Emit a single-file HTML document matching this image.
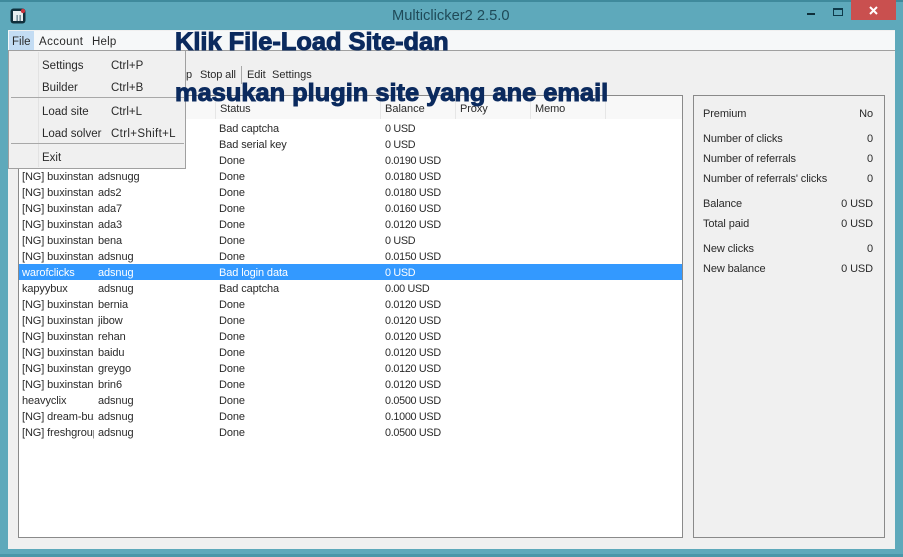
<!DOCTYPE html>
<html><head><meta charset="utf-8"><style>
html,body{margin:0;padding:0}
body{width:903px;height:557px;position:relative;overflow:hidden;background:#5ea9bb;font-family:"Liberation Sans",sans-serif;font-size:11px;letter-spacing:-.1px;color:#2a2a2a}
.a{position:absolute;white-space:nowrap}
.t{position:absolute;white-space:nowrap;line-height:16px;height:16px;margin-top:1px}
.t[style*="left:385px"]{font-size:10.8px;letter-spacing:-.3px}
.m{font-size:11.5px;letter-spacing:0}
.ov{position:absolute;white-space:nowrap;font-weight:bold;color:#0b2a5e;font-size:25.4px;letter-spacing:0;line-height:30px;-webkit-text-stroke:1px #0b2a5e}
</style></head><body>
<div class="a" style="left:0;top:0;width:903px;height:2px;background:#3f8a9c"></div>
<div class="a" style="left:8px;top:30px;width:887px;height:519px;background:#f0f0f0"></div>
<div class="a" style="left:0;top:554px;width:903px;height:3px;background:#4a97a9"></div>
<div class="a" style="left:392px;top:8px;font-size:14.7px;letter-spacing:0;line-height:16px;color:#1f4a58">Multiclicker2 2.5.0</div>
<svg class="a" style="left:10px;top:8px" width="16" height="16" viewBox="0 0 16 16"><rect x=".5" y=".5" width="15" height="15" rx="3" fill="#10303c"/><rect x="3" y="3" width="10" height="10" fill="#e8eef0"/><rect x="6.5" y="7" width="1.3" height="6" fill="#5f7f8a"/><rect x="9.5" y="7" width="1.3" height="6" fill="#5f7f8a"/><circle cx="13" cy="3" r="2.2" fill="#c8353f"/></svg>
<div class="a" style="left:807px;top:13px;width:8px;height:2px;background:#0f2f3a"></div>
<div class="a" style="left:833px;top:8px;width:8px;height:5px;border:1.5px solid #0f3a4a;border-top-width:2.5px"></div>
<div class="a" style="left:851px;top:0;width:45px;height:20px;background:#c9504f"></div>
<svg class="a" style="left:868px;top:5px" width="11" height="11" viewBox="0 0 11 11"><path d="M2 2L9 9M9 2L2 9" stroke="#fff" stroke-width="2"/></svg>
<div class="a" style="left:8px;top:31px;width:887px;height:19px;background:#f6f8f9"></div>
<div class="a" style="left:8px;top:50px;width:887px;height:1px;background:#a0a0a0"></div>
<div class="a" style="left:9px;top:31px;width:25px;height:19px;background:#c3dcf3"></div>
<div class="t m" style="left:12px;top:33px">File</div>
<div class="t m" style="left:39px;top:33px;letter-spacing:.4px">Account</div>
<div class="t m" style="left:92px;top:33px;letter-spacing:.2px">Help</div>
<div class="t" style="left:186px;top:66px">p</div>
<div class="t" style="left:200px;top:66px">Stop all</div>
<div class="a" style="left:241px;top:66px;width:1px;height:18px;background:#a8a8a8"></div>
<div class="t" style="left:247px;top:66px">Edit</div>
<div class="t" style="left:272px;top:66px;letter-spacing:0">Settings</div>
<div class="a" style="left:18px;top:95px;width:663px;height:441px;background:#fff;border:1px solid #8a8a8a"></div>
<div class="a" style="left:19px;top:96px;width:663px;height:23px;background:#f8f8f8"></div>
<div class="a" style="left:215px;top:96px;width:1px;height:23px;background:#e6e6e6"></div>
<div class="a" style="left:380px;top:96px;width:1px;height:23px;background:#e6e6e6"></div>
<div class="a" style="left:455px;top:96px;width:1px;height:23px;background:#e6e6e6"></div>
<div class="a" style="left:530px;top:96px;width:1px;height:23px;background:#e6e6e6"></div>
<div class="a" style="left:605px;top:96px;width:1px;height:23px;background:#e6e6e6"></div>
<div class="t" style="left:220px;top:100px">Status</div>
<div class="t" style="left:385px;top:100px;font-size:11px;letter-spacing:0">Balance</div>
<div class="t" style="left:460px;top:100px">Proxy</div>
<div class="t" style="left:535px;top:100px">Memo</div>
<div class="a" style="left:19px;top:264px;width:663px;height:16px;background:#3399ff"></div>
<div class="t" style="left:219px;top:120px">Bad captcha</div><div class="t" style="left:385px;top:120px">0 USD</div>
<div class="t" style="left:219px;top:136px">Bad serial key</div><div class="t" style="left:385px;top:136px">0 USD</div>
<div class="t" style="left:219px;top:152px">Done</div><div class="t" style="left:385px;top:152px">0.0190 USD</div>
<div class="t" style="left:22px;top:168px">[NG] buxinstan</div><div class="t" style="left:98px;top:168px">adsnugg</div><div class="t" style="left:219px;top:168px">Done</div><div class="t" style="left:385px;top:168px">0.0180 USD</div>
<div class="t" style="left:22px;top:184px">[NG] buxinstan</div><div class="t" style="left:98px;top:184px">ads2</div><div class="t" style="left:219px;top:184px">Done</div><div class="t" style="left:385px;top:184px">0.0180 USD</div>
<div class="t" style="left:22px;top:200px">[NG] buxinstan</div><div class="t" style="left:98px;top:200px">ada7</div><div class="t" style="left:219px;top:200px">Done</div><div class="t" style="left:385px;top:200px">0.0160 USD</div>
<div class="t" style="left:22px;top:216px">[NG] buxinstan</div><div class="t" style="left:98px;top:216px">ada3</div><div class="t" style="left:219px;top:216px">Done</div><div class="t" style="left:385px;top:216px">0.0120 USD</div>
<div class="t" style="left:22px;top:232px">[NG] buxinstan</div><div class="t" style="left:98px;top:232px">bena</div><div class="t" style="left:219px;top:232px">Done</div><div class="t" style="left:385px;top:232px">0 USD</div>
<div class="t" style="left:22px;top:248px">[NG] buxinstan</div><div class="t" style="left:98px;top:248px">adsnug</div><div class="t" style="left:219px;top:248px">Done</div><div class="t" style="left:385px;top:248px">0.0150 USD</div>
<div class="t" style="left:22px;top:264px;color:#fff">warofclicks</div><div class="t" style="left:98px;top:264px;color:#fff">adsnug</div><div class="t" style="left:219px;top:264px;color:#fff">Bad login data</div><div class="t" style="left:385px;top:264px;color:#fff">0 USD</div>
<div class="t" style="left:22px;top:280px">kapyybux</div><div class="t" style="left:98px;top:280px">adsnug</div><div class="t" style="left:219px;top:280px">Bad captcha</div><div class="t" style="left:385px;top:280px">0.00 USD</div>
<div class="t" style="left:22px;top:296px">[NG] buxinstan</div><div class="t" style="left:98px;top:296px">bernia</div><div class="t" style="left:219px;top:296px">Done</div><div class="t" style="left:385px;top:296px">0.0120 USD</div>
<div class="t" style="left:22px;top:312px">[NG] buxinstan</div><div class="t" style="left:98px;top:312px">jibow</div><div class="t" style="left:219px;top:312px">Done</div><div class="t" style="left:385px;top:312px">0.0120 USD</div>
<div class="t" style="left:22px;top:328px">[NG] buxinstan</div><div class="t" style="left:98px;top:328px">rehan</div><div class="t" style="left:219px;top:328px">Done</div><div class="t" style="left:385px;top:328px">0.0120 USD</div>
<div class="t" style="left:22px;top:344px">[NG] buxinstan</div><div class="t" style="left:98px;top:344px">baidu</div><div class="t" style="left:219px;top:344px">Done</div><div class="t" style="left:385px;top:344px">0.0120 USD</div>
<div class="t" style="left:22px;top:360px">[NG] buxinstan</div><div class="t" style="left:98px;top:360px">greygo</div><div class="t" style="left:219px;top:360px">Done</div><div class="t" style="left:385px;top:360px">0.0120 USD</div>
<div class="t" style="left:22px;top:376px">[NG] buxinstan</div><div class="t" style="left:98px;top:376px">brin6</div><div class="t" style="left:219px;top:376px">Done</div><div class="t" style="left:385px;top:376px">0.0120 USD</div>
<div class="t" style="left:22px;top:392px">heavyclix</div><div class="t" style="left:98px;top:392px">adsnug</div><div class="t" style="left:219px;top:392px">Done</div><div class="t" style="left:385px;top:392px">0.0500 USD</div>
<div class="t" style="left:22px;top:408px;width:72px;overflow:hidden">[NG] dream-bux</div><div class="t" style="left:98px;top:408px">adsnug</div><div class="t" style="left:219px;top:408px">Done</div><div class="t" style="left:385px;top:408px">0.1000 USD</div>
<div class="t" style="left:22px;top:424px;width:72px;overflow:hidden">[NG] freshgroup</div><div class="t" style="left:98px;top:424px">adsnug</div><div class="t" style="left:219px;top:424px">Done</div><div class="t" style="left:385px;top:424px">0.0500 USD</div>
<div class="a" style="left:693px;top:95px;width:190px;height:441px;border:1px solid #8a8a8a"></div>
<div class="t" style="left:703px;top:105px">Premium</div><div class="t" style="right:30px;top:105px">No</div>
<div class="t" style="left:703px;top:130px">Number of clicks</div><div class="t" style="right:30px;top:130px">0</div>
<div class="t" style="left:703px;top:150px">Number of referrals</div><div class="t" style="right:30px;top:150px">0</div>
<div class="t" style="left:703px;top:170px">Number of referrals' clicks</div><div class="t" style="right:30px;top:170px">0</div>
<div class="t" style="left:703px;top:195px">Balance</div><div class="t" style="right:30px;top:195px">0 USD</div>
<div class="t" style="left:703px;top:215px">Total paid</div><div class="t" style="right:30px;top:215px">0 USD</div>
<div class="t" style="left:703px;top:240px">New clicks</div><div class="t" style="right:30px;top:240px">0</div>
<div class="t" style="left:703px;top:260px">New balance</div><div class="t" style="right:30px;top:260px">0 USD</div>
<div class="a" style="left:8px;top:50px;width:176px;height:117px;background:#f0f0f0;border:1px solid #a0a0a0"></div>
<div class="a" style="left:38px;top:52px;width:1px;height:115px;background:#e2e2e2"></div>
<div class="a" style="left:11px;top:97px;width:173px;height:1px;background:#a8a8a8"></div>
<div class="a" style="left:11px;top:143px;width:173px;height:1px;background:#a8a8a8"></div>
<div class="t m" style="left:42px;top:57px">Settings</div><div class="t m" style="left:111px;top:57px">Ctrl+P</div>
<div class="t m" style="left:42px;top:79px">Builder</div><div class="t m" style="left:111px;top:79px">Ctrl+B</div>
<div class="t m" style="left:42px;top:103px">Load site</div><div class="t m" style="left:111px;top:103px">Ctrl+L</div>
<div class="t m" style="left:42px;top:125px">Load solver</div><div class="t m" style="left:111px;top:125px;letter-spacing:.35px">Ctrl+Shift+L</div>
<div class="t m" style="left:42px;top:149px">Exit</div>
<div class="ov" style="left:175px;top:27px">Klik File-Load Site-dan</div>
<div class="ov" style="left:175px;top:78px">masukan plugin site yang ane email</div>
</body></html>
